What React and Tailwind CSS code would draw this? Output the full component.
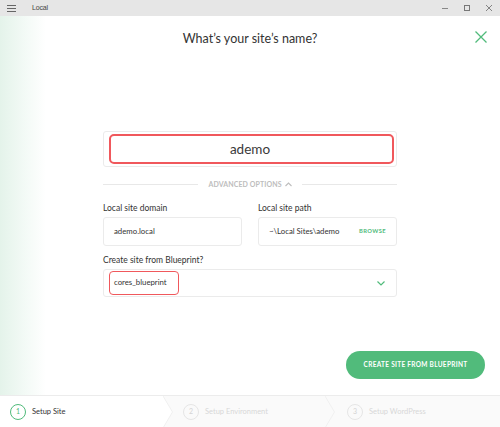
import React from 'react';

const font = { fontFamily: 'Lato, "Open Sans", sans-serif' };

function TitleBar() {
    return (
        <div className="h-4 bg-[#e6e6e6] flex items-center text-[#444]">
            <svg width="9" height="7" viewBox="0 0 9 7" className="ml-[7px]">
                <path d="M0 0.5h9M0 3.5h9M0 6.5h9" stroke="#666" strokeWidth="1" />
            </svg>
            <span className="ml-[16px] text-[7px] tracking-[-0.2px]" style={{ fontFamily: '"Liberation Sans", sans-serif' }}>Local</span>
            <div className="ml-auto flex items-center">
                <div className="w-[22px] flex justify-center">
                    <div className="w-[6px] h-px bg-[#888]" />
                </div>
                <div className="w-[22px] flex justify-center">
                    <div className="w-[6px] h-[6px] border border-[#777]" />
                </div>
                <div className="w-[22px] flex justify-center">
                    <svg width="6" height="6" viewBox="0 0 6 6">
                        <path d="M0 0L6 6M6 0L0 6" stroke="#777" strokeWidth="0.9" />
                    </svg>
                </div>
            </div>
        </div>
    );
}

function StepCircle({ n, active }) {
    return (
        <div className={`w-4 h-4 rounded-full border flex items-center justify-center text-[7px] ${active ? 'border-[#51bb7b] text-[#51bb7b]' : 'border-[#e6e6e6] text-[#d4d4d4]'}`}>
            {n}
        </div>
    );
}

function Arrow({ white }) {
    return (
        <svg width="10" height="32" viewBox="0 0 10 32" className="shrink-0">
            {white && <path d="M0 0 L9.5 16 L0 32 Z" fill="#fff" />}
            <path d="M0 0 L9.5 16 L0 32" fill="none" stroke="#f0f0f0" strokeWidth="1" />
        </svg>
    );
}

function Stepper() {
    return (
        <div className="h-8 flex border-t border-[#ececec] bg-[#fafafa] text-[7.5px]">
            <div className="w-[163px] bg-white flex items-center gap-[6px] pl-[10px]">
                <StepCircle n="1" active />
                <span className="text-[#333]">Setup Site</span>
            </div>
            <Arrow white />
            <div className="w-[152px] flex items-center gap-[6px] pl-[10px]">
                <StepCircle n="2" />
                <span className="text-[#d8d8d8]">Setup Environment</span>
            </div>
            <Arrow />
            <div className="flex-1 flex items-center gap-[6px] pl-[12px]">
                <StepCircle n="3" />
                <span className="text-[#d8d8d8]">Setup WordPress</span>
            </div>
        </div>
    );
}

export default function App() {
    return (
        <div className="w-[500px] h-[427px] flex flex-col bg-white overflow-hidden" style={font}>
            <TitleBar />

            <div className="relative h-[379px] flex flex-col bg-[linear-gradient(to_right,#e4f3ea_0px,#f3faf6_25px,#ffffff_46px)]">
                {/* close */}
                <svg width="12" height="12" viewBox="0 0 12 12" className="absolute right-[13px] top-[15px]">
                    <path d="M0.5 0.5L11.5 11.5M11.5 0.5L0.5 11.5" stroke="#51bb7b" strokeWidth="1.3" />
                </svg>

                <h1 className="mt-[12px] h-[22px] leading-[22px] text-center text-[12.5px] text-[#333]">
                    What’s your site’s name?
                </h1>

                <div className="w-[294px] mx-auto">
                    {/* site name */}
                    <div className="relative mt-[81px] h-[36px] border border-[#ebebeb] rounded-[3px] flex items-center justify-center text-[13.5px] text-[#3a3a3a]">
                        ademo
                        <div className="absolute left-[5px] right-[2px] top-[2px] bottom-[2px] border-2 border-[#f0585c] rounded-[5px]" />
                    </div>

                    {/* advanced options */}
                    <div className="mt-[12px] h-[10px] flex items-center gap-[10px]">
                        <div className="flex-1 h-px bg-[#e8e8e8]" />
                        <div className="flex items-center gap-[3px] text-[7px] font-bold text-[#bdbdbd] tracking-[0.1px]">
                            ADVANCED OPTIONS
                            <svg width="7" height="5" viewBox="0 0 7 5">
                                <path d="M0.5 4L3.5 1L6.5 4" fill="none" stroke="#bdbdbd" strokeWidth="1.1" />
                            </svg>
                        </div>
                        <div className="flex-1 h-px bg-[#e8e8e8]" />
                    </div>

                    {/* domain / path */}
                    <div className="mt-[14px] grid grid-cols-2 gap-x-[16px] text-[8.5px] text-[#333]">
                        <div>
                            <div className="h-[10px] leading-[10px]">Local site domain</div>
                            <div className="mt-[4px] h-[29px] border border-[#ebebeb] rounded-[3px] flex items-center pl-[10px] text-[7.8px]">
                                ademo.local
                            </div>
                        </div>
                        <div>
                            <div className="h-[10px] leading-[10px]">Local site path</div>
                            <div className="mt-[4px] h-[29px] border border-[#ebebeb] rounded-[3px] flex items-center pl-[10px] pr-[10px] text-[7.8px]">
                                <span>~\Local Sites\ademo</span>
                                <span className="ml-auto text-[5.8px] font-bold text-[#51bb7b] tracking-[0.4px]">BROWSE</span>
                            </div>
                        </div>
                    </div>

                    {/* blueprint */}
                    <div className="mt-[9px] h-[10px] leading-[10px] text-[8.5px] text-[#333]">Create site from Blueprint?</div>
                    <div className="mt-[4px] h-[28px] border border-[#ebebeb] rounded-[3px] flex items-center pl-[10px] pr-[10px] text-[7.8px] text-[#333]">
                        <div className="relative">
                            cores_blueprint
                            <div className="absolute -left-[5px] -right-[12px] -top-[6px] -bottom-[6px] border border-[#f0585c] rounded-[4px]" />
                        </div>
                        <svg width="8" height="5" viewBox="0 0 8 5" className="ml-auto mr-[1px]">
                            <path d="M0.5 0.5L4 4L7.5 0.5" fill="none" stroke="#51bb7b" strokeWidth="1.2" />
                        </svg>
                    </div>
                </div>

                <button className="mt-auto mb-[16px] mr-[15px] self-end w-[139px] h-[28px] rounded-full bg-[#51bb7b] text-white text-[6.5px] font-bold tracking-[0.3px]">
                    CREATE SITE FROM BLUEPRINT
                </button>
            </div>

            <Stepper />
        </div>
    );
}
